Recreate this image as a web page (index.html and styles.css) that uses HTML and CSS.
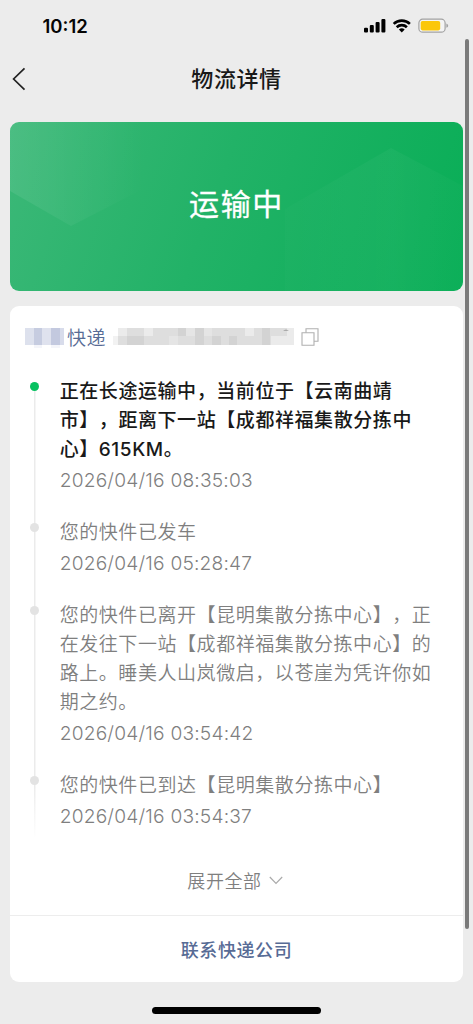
FILE: index.html
```
<!DOCTYPE html>
<html lang="zh-CN">
<head>
<meta charset="utf-8">
<title>物流详情</title>
<link rel="stylesheet" href="styles.css">
</head>
<body>
<div class="screen">
  <header class="status">
    <span class="clock">10:12</span>
    <svg class="status-icons" width="86" height="16" viewBox="0 0 86 16">
      <rect x="0" y="9.8" width="4" height="4.8" rx="1.1"/>
      <rect x="5.8" y="7" width="4" height="7.6" rx="1.1"/>
      <rect x="11.6" y="4" width="4" height="10.6" rx="1.1"/>
      <rect x="17.4" y="1" width="4" height="13.6" rx="1.1"/>
      <g fill="none" stroke="#000" stroke-width="2.6">
        <path d="M29.7 5.9a11.6 11.6 0 0 1 16.2 0"/>
        <path d="M32.7 9.2a7.3 7.3 0 0 1 10.2 0"/>
      </g>
      <path d="M34.9 11.6a4.1 4.1 0 0 1 5.8 0L37.8 14.6z"/>
      <rect x="54.9" y="1.2" width="26.2" height="13" rx="3.8" fill="#f4f4f4" stroke="#a2a2a2" stroke-width="1.2"/>
      <rect x="56.7" y="3" width="19.5" height="9.4" rx="1.8" fill="#fbc70b"/>
      <path d="M82.4 5.6q1.8.7 1.8 2.1t-1.8 2.1z" fill="#a2a2a2"/>
    </svg>
  </header>
  <nav class="nav">
    <svg class="back" width="14" height="24" viewBox="0 0 14 24"><path d="M12.5 1.3 1.6 12l10.9 10.7" fill="none" stroke="#222" stroke-width="1.7"/></svg>
    <h1 class="title">物流详情</h1>
  </nav>
  <main class="content">
    <section class="banner">
      <svg class="banner-art" width="453" height="169" viewBox="0 0 453 169">
        <defs>
          <linearGradient id="glow" x1="0" y1="0" x2="1" y2="0"><stop offset="0" stop-color="#fff" stop-opacity=".08"/><stop offset="1" stop-color="#fff" stop-opacity="0"/></linearGradient>
          <linearGradient id="peak" x1="0" y1="0" x2="1" y2="0"><stop offset="0" stop-color="#fff" stop-opacity=".012"/><stop offset=".6" stop-color="#fff" stop-opacity=".035"/><stop offset="1" stop-color="#fff" stop-opacity=".015"/></linearGradient>
        </defs>
        <path d="M0 0H135V66L61 104 0 69z" fill="url(#glow)"/>
        <path d="M275 169V87L381 26l72 38v105z" fill="url(#peak)"/>
      </svg>
      <span class="banner-text">运输中</span>
    </section>
    <section class="card">
      <div class="carrier">
        <svg class="mask-name" width="41" height="22" viewBox="0 0 41 22">
          <path d="M1 2h9v17H1z" fill="#dde1ed"/><path d="M10 2h8v17h-8z" fill="#c6cce0"/><path d="M18 2h9v17h-9z" fill="#dfe2ee"/><path d="M27 2h9v17h-9z" fill="#c3c9df"/><path d="M36 2h4v17h-4z" fill="#d8dceb"/><path d="M10 19h8v3h-8zM27 19h9v3h-9z" fill="#f4f5fa"/>
        </svg>
        <span class="carrier-name">快递</span>
        <svg class="mask-number" width="184" height="18" viewBox="0 0 184 18">
          <path d="M7 0h176v17H7z" fill="#dedede"/>
          <path d="M2 8h5v9H2z" fill="#f2f2f2"/>
          <path d="M7 0h9v8H7zM33 0h9v8h-9zM134 0h9v8h-9zM160 8h23v9h-23zM176 0h7v8h-7z" fill="#ebebeb"/>
          <path d="M16 8h17v9H16zM67 0h8v8h-8zM84 0h9v17h-9zM101 8h9v9h-9zM118 8h8v9h-8zM151 0h8v17h-8z" fill="#d3d3d3"/>
          <path d="M58 8h9v9h-9zM75 0h9v8h-9zM93 0h8v8h-8z" fill="#e5e5e5"/>
          <path d="M172 2.5q3-1.6 6 0z" fill="#777"/>
        </svg>
        <svg class="copy" width="18" height="18" viewBox="0 0 18 18" fill="none" stroke="#b0b0b0" stroke-width="1.1"><path d="M5 4.8V.8h12v12.4h-4"/><path d="M1 4.8h12v12.4H1z"/></svg>
      </div>
      <ol class="timeline">
        <li class="event current"><p class="desc">正在长途运输中，当前位于【云南曲靖<br>市】，距离下一站【成都祥福集散分拣中<br>心】615KM。</p><time class="time">2026/04/16 08:35:03</time></li>
        <li class="event"><p class="desc">您的快件已发车</p><time class="time">2026/04/16 05:28:47</time></li>
        <li class="event"><p class="desc">您的快件已离开【昆明集散分拣中心】，正<br>在发往下一站【成都祥福集散分拣中心】的<br>路上。睡美人山岚微启，以苍崖为凭许你如<br>期之约。</p><time class="time">2026/04/16 03:54:42</time></li>
        <li class="event"><p class="desc">您的快件已到达【昆明集散分拣中心】</p><time class="time">2026/04/16 03:54:37</time></li>
      </ol>
      <div class="expand"><span>展开全部</span><svg width="14" height="9" viewBox="0 0 14 9"><path d="M.8 1 7 7.4 13.2 1" fill="none" stroke="#aaa" stroke-width="1.2"/></svg></div>
      <div class="contact">联系快递公司</div>
    </section>
  </main>
  <div class="home-bar"></div>
  <div class="scrollbar"></div>
</div>
</body>
</html>
```

FILE: styles.css
```
* { box-sizing: border-box; margin: 0; padding: 0; }
body {
  background: #ececec;
  font-family: Inter, "Noto Sans CJK SC", sans-serif;
  text-spacing-trim: space-all;
}
.screen {
  position: relative;
  width: 473px;
  height: 1024px;
  overflow: hidden;
  display: flex;
  flex-direction: column;
}
.status {
  height: 52px;
  padding: 0 23px 0 42.5px;
  display: flex;
  align-items: center;
  justify-content: space-between;
}
.clock { font-size: 18.5px; font-weight: 600; color: #050505; }
.status-icons { display: block; }
.nav {
  height: 54px;
  padding: 0 12px;
  display: grid;
  grid-template-columns: 14px 1fr 14px;
  align-items: center;
}
.title {
  font-size: 22px;
  line-height: 30px;
  font-weight: 500;
  letter-spacing: .6px;
  text-align: center;
  color: #191919;
}
.content { padding: 16px 10px 0; display: flex; flex-direction: column; gap: 15px; }
.banner {
  position: relative;
  height: 169px;
  border-radius: 9px;
  overflow: hidden;
  background: linear-gradient(110deg, #3cb878 0%, #22b267 45%, #08ae56 100%);
  display: flex;
  align-items: center;
  justify-content: center;
}
.banner-art { position: absolute; inset: 0; }
.banner-text {
  position: relative;
  font-size: 30px;
  line-height: 40px;
  font-weight: 400;
  letter-spacing: 1.6px;
  padding-bottom: 5px;
  color: #fff;
  -webkit-text-stroke: .3px #fff;
}
.card { height: 676px; background: #fff; border-radius: 9px; display: flex; flex-direction: column; }
.carrier { height: 62px; padding-left: 14px; display: flex; align-items: center; }
.carrier-name { font-size: 19px; line-height: 28px; letter-spacing: .5px; color: #576b95; margin-left: 2px; padding-top: 3px; font-weight: 350; }
.mask-number { margin-left: 5px; }
.copy { margin-left: 6px; }
.timeline { list-style: none; padding: 8.5px 10px 0 20px; }
.event {
  display: grid;
  grid-template-columns: 9px 1fr;
  grid-template-rows: auto auto;
  column-gap: 20.7px;
  color: #7f7f7f;
  padding-bottom: 22.5px;
  background: linear-gradient(#ebebeb, #ebebeb) 4px 10px / 1.5px 100% no-repeat;
}
.event::before {
  content: "";
  width: 9px;
  height: 9px;
  margin-top: 5px;
  border-radius: 50%;
  background: #e3e3e3;
  grid-row: 1 / 3;
}
.event + .event { background-position: 4px 0; }
.event:last-child { padding-bottom: 8px; background-image: linear-gradient(#ebebeb 20%, #fff); }
.desc { font-size: 19px; line-height: 29px; letter-spacing: .56px; white-space: nowrap; font-weight: 350; }
.time { display: block; grid-column: 2; margin-top: 2.5px; font-size: 19.2px; line-height: 29px; letter-spacing: .18px; font-weight: 360; }
.current::before { background: #07c160; }
.current .desc { color: #191919; font-weight: 500; letter-spacing: .57px; }
.expand {
  margin-top: auto;
  height: 70px;
  padding-right: 3px;
  display: flex;
  align-items: center;
  justify-content: center;
  gap: 7px;
  font-size: 18px;
  letter-spacing: .6px;
  font-weight: 350;
  color: #7f7f7f;
}
.contact {
  height: 67px;
  border-top: 1px solid #ededed;
  display: flex;
  align-items: center;
  justify-content: center;
  font-size: 18px;
  letter-spacing: .6px;
  font-weight: 500;
  color: #576b95;
}
.home-bar { width: 169px; height: 7px; margin: 25px auto 0; border-radius: 4px; background: #000; }
.scrollbar { position: absolute; right: 4px; top: 39px; width: 4px; height: 890px; border-radius: 2px; background: #7a7a7a; }
```
